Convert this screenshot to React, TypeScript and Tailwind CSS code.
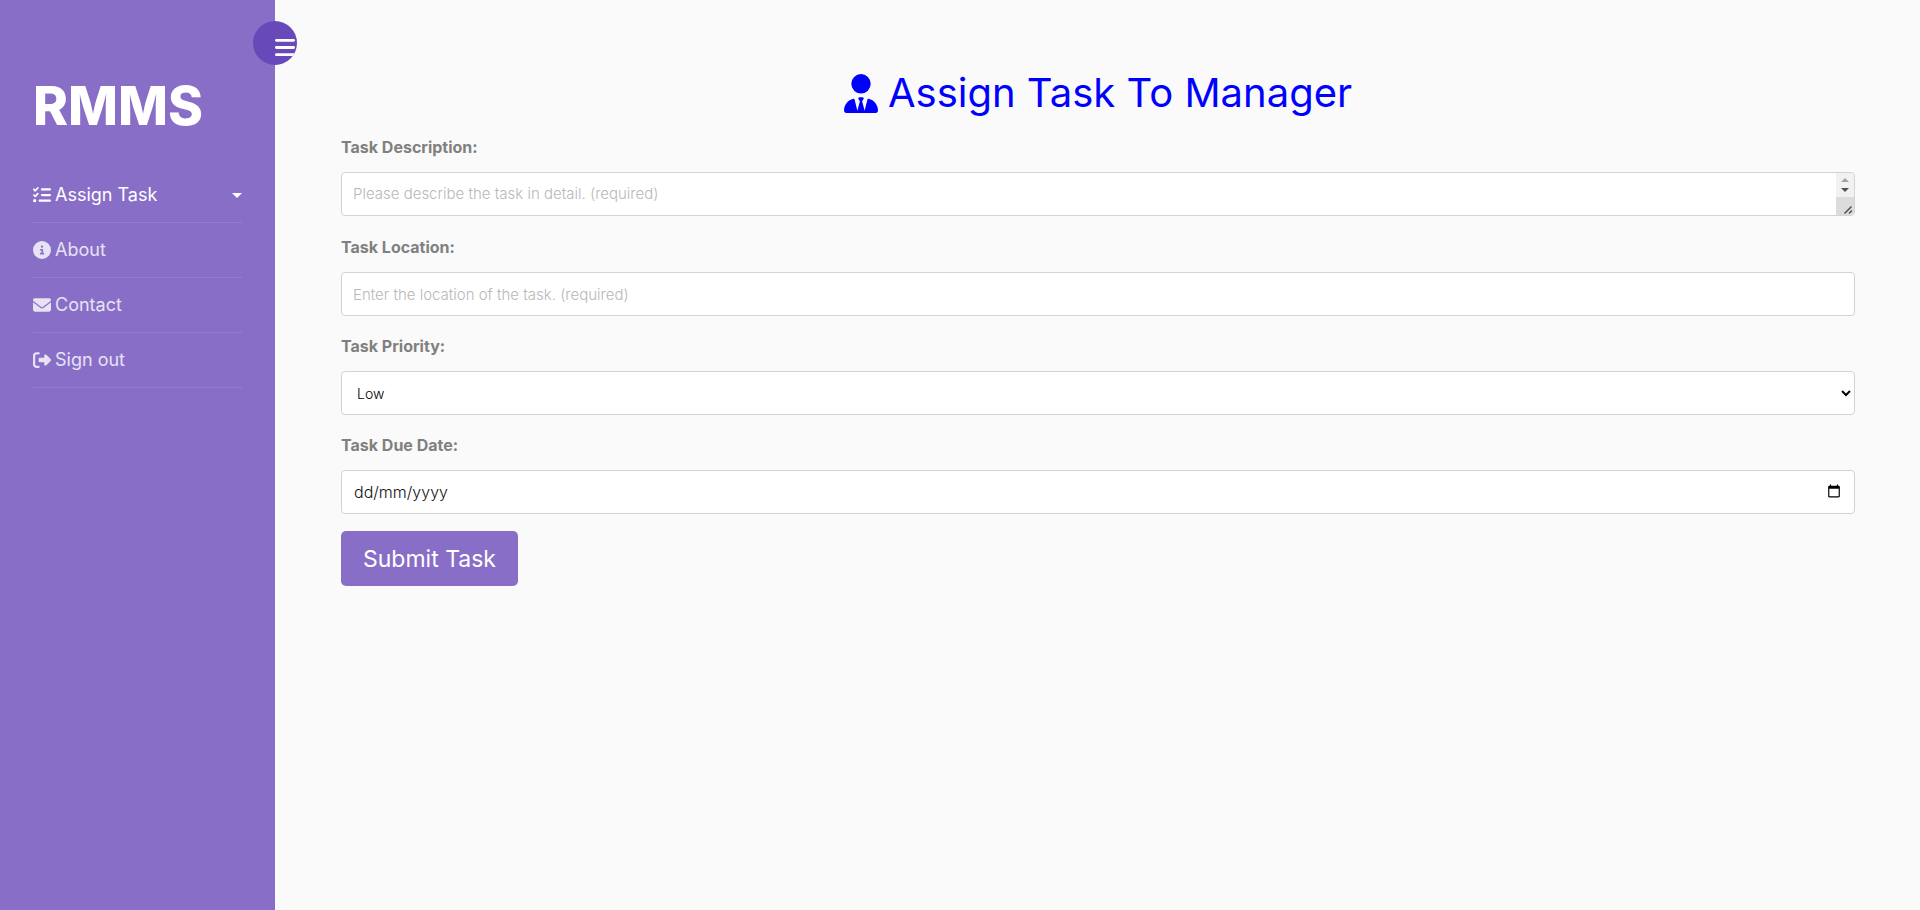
import { useRef, useState } from "react";
import {
  FaBars,
  FaListCheck,
  FaCircleInfo,
  FaEnvelope,
  FaRightFromBracket,
  FaUserTie,
} from "react-icons/fa6";

const links = [
  { label: "Assign Task", icon: FaListCheck, active: true },
  { label: "About", icon: FaCircleInfo, active: false },
  { label: "Contact", icon: FaEnvelope, active: false },
  { label: "Sign out", icon: FaRightFromBracket, active: false },
];

const labelClass = "block text-[16px] leading-6 font-bold text-[#808080]";
const fieldClass =
  "block w-full h-11 rounded border border-[#ced4da] bg-white font-light text-black outline-none placeholder:opacity-100";
const hintClass = "text-[15px] placeholder:text-[#b8b8b8]";

function Sidebar() {
  return (
    <aside className="relative w-[275px] shrink-0 bg-[#886ec7] px-[33px] pt-[72px] text-white">
      <button
        type="button"
        aria-label="Toggle menu"
        className="absolute top-[21px] -right-[22px] flex size-11 items-center overflow-hidden rounded-full bg-[#6749b9] pt-2 pl-[22px]"
      >
        <FaBars className="h-[23px] w-5 shrink-0" />
      </button>
      <h1 className="text-[53px] leading-[68px] font-extrabold">
        <a href="#home">RMMS</a>
      </h1>
      <nav className="mt-7">
        <ul>
          {links.map(({ label, icon: Icon, active }) => (
            <li key={label} className="border-b border-white/10">
              <a
                href="#menu"
                className={
                  active
                    ? "flex items-center gap-1 py-[10px] text-[18px] leading-[34px] text-white"
                    : "flex items-center gap-1 py-[10px] text-[18px] leading-[34px] text-white/80"
                }
              >
                <Icon className="size-[18px] shrink-0" />
                {label}
                {active && (
                  <svg viewBox="0 0 10 5" className="ml-auto h-[5px] w-[10px] fill-white">
                    <path d="M0 0h10L5 5z" />
                  </svg>
                )}
              </a>
            </li>
          ))}
        </ul>
      </nav>
    </aside>
  );
}

function ScrollControls() {
  return (
    <svg
      aria-hidden="true"
      viewBox="0 0 18 42"
      className="pointer-events-none absolute top-px right-px h-[42px] w-[18px] rounded-r-[3px]"
    >
      <path d="M0 0h18v24H0z" fill="#f1f1f1" />
      <path d="M0 24h18v18H0z" fill="#dcdcdc" />
      <path d="M5 9h8L9 5z" fill="#a3a3a3" />
      <path d="M5 15h8l-4 4z" fill="#505050" />
      <path d="M8.500 40.500l7-7M13 40.500l3-3" stroke="#505050" strokeWidth="1.500" fill="none" />
    </svg>
  );
}

export default function App() {
  const [date, setDate] = useState("");
  const dateField = useRef<HTMLInputElement>(null);

  return (
    <div className="flex min-h-screen bg-[#fafafa] font-['Inter','Noto_Sans',sans-serif]">
      <Sidebar />
      <main className="min-w-0 flex-1 pt-[63px] pr-[65px] pl-[66px]">
        <h2 className="flex items-center justify-center gap-[10px] text-[40px] leading-[60px] font-normal text-[#0000ff]">
          <FaUserTie className="h-[39px] w-[34px]" />
          Assign Task To Manager
        </h2>
        <form className="mt-3" onSubmit={(e) => e.preventDefault()}>
          <div className="mb-[19px]">
            <label htmlFor="description" className={labelClass}>
              Task Description:
            </label>
            <div className="relative mt-[13px]">
              <textarea
                id="description"
                required
                placeholder="Please describe the task in detail. (required)"
                className={`${fieldClass} ${hintClass} resize-none overflow-y-scroll px-[11px] py-[10px] leading-[22px]`}
              />
              <ScrollControls />
            </div>
          </div>
          <div className="mb-[18px]">
            <label htmlFor="location" className={labelClass}>
              Task Location:
            </label>
            <input
              id="location"
              type="text"
              required
              placeholder="Enter the location of the task. (required)"
              className={`${fieldClass} ${hintClass} mt-[13px] px-[11px]`}
            />
          </div>
          <div className="mb-[18px]">
            <label htmlFor="priority" className={labelClass}>
              Task Priority:
            </label>
            <select id="priority" className={`${fieldClass} mt-[13px] px-[11px] text-[14px]`}>
              <option>Low</option>
              <option>Medium</option>
              <option>High</option>
            </select>
          </div>
          <div className="mb-[17px]">
            <label htmlFor="due" className={labelClass}>
              Task Due Date:
            </label>
            <div className="relative mt-[13px]">
              <input
                ref={dateField}
                id="due"
                type="text"
                value={date}
                onChange={(e) => setDate(e.target.value)}
                placeholder="dd/mm/yyyy"
                className={`${fieldClass} px-3 text-[16px] placeholder:text-[#111111]`}
              />
              <button
                type="button"
                aria-label="Choose a date"
                onClick={() => dateField.current?.focus()}
                className="absolute top-[14px] right-[14px]"
              >
                <svg viewBox="0 0 24 24" className="size-[14px] fill-black">
                  <path d="M20 3h-1V1h-2v2H7V1H5v2H4c-1.100 0-2 .9-2 2v16c0 1.100.9 2 2 2h16c1.100 0 2-.9 2-2V5c0-1.100-.9-2-2-2zm0 18H4V8h16v13z" />
                </svg>
              </button>
            </div>
          </div>
          <button
            type="submit"
            className="h-[55px] rounded-[5px] bg-[#886ec7] px-[22px] text-[23px] leading-8 text-white"
          >
            Submit Task
          </button>
        </form>
      </main>
    </div>
  );
}
